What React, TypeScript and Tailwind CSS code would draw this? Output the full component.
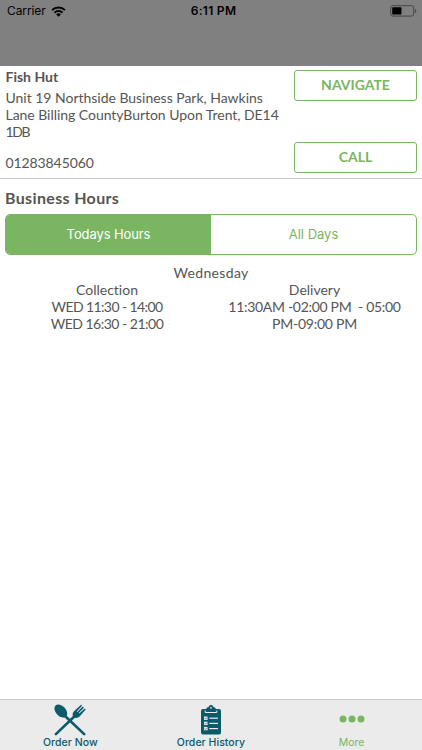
import type { ReactNode } from "react";

function StatusBar() {
  return (
    <div className="grid h-[22px] grid-cols-3 items-center pl-[7px] pr-[5px] font-['Inter',sans-serif] text-[12px] leading-[22px] text-black">
      <div className="flex items-center gap-[5px]">
        <span className="tracking-[-0.1px]">Carrier</span>
        <svg width="15" height="11" viewBox="0 0 15 11" fill="none" stroke="currentColor" strokeWidth="2">
          <path d="M1 4.1a9.3 9.3 0 0 1 13 0" />
          <path d="M3.5 6.7a5.7 5.7 0 0 1 8 0" />
          <path d="M5.2 8.4a3.3 3.3 0 0 1 4.6 0L7.5 10.7Z" fill="currentColor" stroke="none" />
        </svg>
      </div>
      <span className="pl-[3px] text-center font-semibold tracking-[0.3px]">6:11 PM</span>
      <svg className="justify-self-end" width="27" height="12" viewBox="0 0 27 12">
        <rect x="0.7" y="0.7" width="23" height="10.4" rx="2.2" fill="none" stroke="#454545" />
        <rect x="2.2" y="2.2" width="9.3" height="7.4" rx="0.8" fill="#000" />
        <path d="M25 4v4c1.7-.5 1.7-3.5 0-4Z" fill="#454545" />
      </svg>
    </div>
  );
}

function OutlineButton({ children }: { children: ReactNode }) {
  return (
    <button
      type="button"
      className="h-[31px] w-[123px] rounded-[3px] border border-[#7ab561] pb-[2px] text-[14px] font-bold leading-[27px] text-[#7ab561]"
    >
      {children}
    </button>
  );
}

function CutleryIcon() {
  return (
    <svg width="32" height="33" viewBox="0 0 32 33" fill="#0b5a6b">
      <ellipse cx="6.8" cy="7" rx="5" ry="7.6" transform="rotate(-43 6.8 7)" />
      <path d="M10.5 11.5 30.2 30.1M21.6 11.2 1.9 30.1" stroke="#0b5a6b" strokeWidth="2.6" strokeLinecap="round" />
      <path d="M19.5 13.1c-1.5-1.8-1-4.3.5-5.8L27.1.8l1 1-5.4 5.6.6.5L28.8 2.6l1.1 1.1-5.3 5.4.6.5 5.6-5.2.9 1-5.9 6.9c-1.6 1.6-4.300 2.400-6.300.8Z" />
    </svg>
  );
}

function ClipboardIcon() {
  return (
    <svg width="20" height="30" viewBox="0 0 20 30">
      <path d="M2 4h3.2c.2-1.2 1-1.7 2.2-1.7C7.7 1 8.6 0 10 0s2.3 1 2.6 2.3c1.2 0 2 .5 2.2 1.7H18a2 2 0 0 1 2 2v21.5a2 2 0 0 1-2 2H2a2 2 0 0 1-2-2V6a2 2 0 0 1 2-2Z" fill="#0b5a6b" />
      <path d="M4.2 5.5v2h11.6v-2" fill="none" stroke="#ebebeb" />
      <circle cx="10" cy="2.8" r="0.9" fill="#ebebeb" />
      <g fill="#ebebeb">
        <rect x="3" y="11.5" width="3.6" height="3.4" />
        <rect x="3" y="16.7" width="3.6" height="3.4" />
        <rect x="3" y="21.9" width="3.6" height="3.4" />
        <rect x="8.3" y="12.6" width="8.7" height="1.2" />
        <rect x="8.3" y="17.8" width="8.7" height="1.2" />
        <rect x="8.3" y="23" width="8.7" height="1.2" />
      </g>
      <path d="m3.7 13.2.8.8 1.5-1.7M3.7 18.4l.8.8 1.5-1.7M3.7 23.6l.8.8 1.5-1.7" fill="none" stroke="#0b5a6b" strokeWidth="0.6" />
    </svg>
  );
}

function MoreIcon() {
  return (
    <svg width="26" height="8" viewBox="0 0 26 8" fill="#7ab561">
      <circle cx="4" cy="4" r="3.5" />
      <circle cx="13" cy="4" r="3.5" />
      <circle cx="22" cy="4" r="3.5" />
    </svg>
  );
}

function TabItem({ icon, label, active }: { icon: ReactNode; label: string; active?: boolean }) {
  return (
    <button type="button" className={`flex flex-col items-center ${active ? "text-[#7ab561]" : "text-[#0b5a6b]"}`}>
      <span className={`flex h-[37px] items-center ${active ? "pt-px" : "pt-[3px]"}`}>{icon}</span>
      <span className={`text-[10.5px] leading-[12px] ${active ? "" : "font-medium tracking-[0.05px]"}`}>{label}</span>
    </button>
  );
}

export default function App() {
  return (
    <div className="flex h-[750px] w-[422px] flex-col overflow-hidden bg-white font-['Lato',sans-serif] text-[14px] leading-[16.7px] text-[#555555] [font-variant-ligatures:none]">
      <header className="h-[66px] shrink-0 bg-[#808080]">
        <StatusBar />
      </header>

      <section className="flex h-[113px] shrink-0 justify-between border-b border-[#c8c8c8] pl-[5.5px] pr-[5px]">
        <div className="whitespace-nowrap pt-[2px]">
          <h1 className="text-[14px] font-bold leading-[17px]">Fish Hut</h1>
          <div className="mt-[5px]">
            <p className="tracking-[-0.02px]">Unit 19 Northside Business Park, Hawkins</p>
            <p className="tracking-[-0.04px]">Lane Billing CountyBurton Upon Trent, DE14</p>
            <p className="pt-px tracking-[-1.4px]">1DB</p>
          </div>
          <p className="mt-[14px] tracking-[-0.1px]">01283845060</p>
        </div>
        <div className="flex flex-col gap-[41px] pt-[4px]">
          <OutlineButton>NAVIGATE</OutlineButton>
          <OutlineButton>CALL</OutlineButton>
        </div>
      </section>

      <main className="flex-1 px-[5px]">
        <h2 className="pt-[9px] text-[16px] font-bold leading-[19px] tracking-[0.35px]">Business Hours</h2>
        <div className="mt-[7px] grid h-[41px] grid-cols-2 overflow-hidden rounded-[5px] border border-[#7ab561] font-['Inter',sans-serif] text-[13px]">
          <button type="button" className="bg-[#7ab561] tracking-[-0.1px] text-white">Todays Hours</button>
          <button type="button" className="text-[#7ab561]">All Days</button>
        </div>
        <p className="mt-[10px] text-center tracking-[0.35px]">Wednesday</p>
        <div className="-mt-px grid grid-cols-2 whitespace-pre text-center leading-[17px]">
          <div className="pr-[2px]">
            <p>Collection</p>
            <p className="tracking-[-0.6px]">WED 11:30 - 14:00</p>
            <p className="tracking-[-0.5px]">WED 16:30 - 21:00</p>
          </div>
          <div className="pl-px">
            <p>Delivery</p>
            <p className="tracking-[-0.3px]">{"11:30AM -02:00 PM  - 05:00"}</p>
            <p className="tracking-[-0.25px]">PM-09:00 PM</p>
          </div>
        </div>
      </main>

      <nav className="grid h-[51px] shrink-0 grid-cols-3 border-t border-[#c9c9c9] bg-[#ebebeb] font-['Inter',sans-serif]">
        <TabItem icon={<CutleryIcon />} label="Order Now" />
        <TabItem icon={<ClipboardIcon />} label="Order History" />
        <TabItem icon={<MoreIcon />} label="More" active />
      </nav>
    </div>
  );
}
